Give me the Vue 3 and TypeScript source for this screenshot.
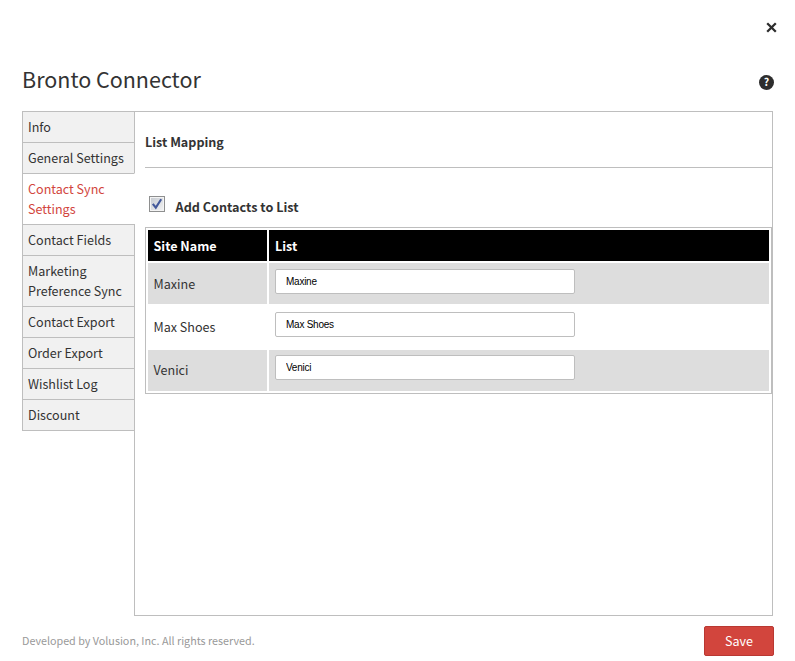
<script setup lang="ts">
import { ref } from 'vue'

const tabs: string[] = [
  'Info',
  'General Settings',
  'Contact Sync Settings',
  'Contact Fields',
  'Marketing Preference Sync',
  'Contact Export',
  'Order Export',
  'Wishlist Log',
  'Discount',
]
const activeTab = ref('Contact Sync Settings')
const addContacts = ref(true)
const sites = ref([
  { name: 'Maxine', list: 'Maxine' },
  { name: 'Max Shoes', list: 'Max Shoes' },
  { name: 'Venici', list: 'Venici' },
])
</script>

<template>
  <div class="dialog">
    <div class="topbar">
      <button class="close" type="button" aria-label="Close">
        <svg width="11" height="11" viewBox="0 0 11 11"><path d="M1.2 1.2 9.8 9.8M9.8 1.2 1.2 9.8" fill="none" stroke="#2d2d2d" stroke-width="2.3" /></svg>
      </button>
    </div>
    <header class="heading">
      <h1>Bronto Connector</h1>
      <span class="help">?</span>
    </header>
    <div class="body">
      <nav class="tabs">
        <a v-for="tab in tabs" :key="tab" class="tab" :class="{ active: tab === activeTab }" @click="activeTab = tab">{{ tab }}</a>
      </nav>
      <main class="panel">
        <h2>List Mapping</h2>
        <div class="option">
          <span class="check" role="checkbox" :aria-checked="addContacts" @click="addContacts = !addContacts">
            <svg v-if="addContacts" width="12" height="12" viewBox="0 0 12 12"><path d="M1.8 5.8 4.8 9.6 10.2 1.2" fill="none" stroke="#43599b" stroke-width="2.1" /></svg>
          </span>
          <span class="option-label">Add Contacts to List</span>
        </div>
        <div class="table">
          <div class="row head"><span class="cell">Site Name</span><span class="cell">List</span></div>
          <div v-for="site in sites" :key="site.name" class="row">
            <span class="cell">{{ site.name }}</span>
            <span class="cell field"><input v-model="site.list" type="text" /></span>
          </div>
        </div>
      </main>
    </div>
    <footer class="footer">
      <span class="credit">Developed by Volusion, Inc. All rights reserved.</span>
      <button class="save" type="button">Save</button>
    </footer>
  </div>
</template>

<style>
body {
  background: #fff;
  overflow: hidden;
}
</style>

<style scoped>
.dialog {
  box-sizing: border-box;
  width: 795px;
  height: 661px;
  padding: 0 22px;
  background: #fff;
  color: #333;
  font-family: "Noto Sans CJK SC", sans-serif;
  font-size: 12.57px;
  line-height: 20px;
}
.dialog * {
  box-sizing: border-box;
}
.topbar {
  display: flex;
  justify-content: flex-end;
  height: 59px;
  padding: 22px 0 0;
  margin-right: -4px;
}
.close {
  display: block;
  width: 11px;
  height: 11px;
  padding: 0;
  border: 0;
  background: none;
}
.close svg {
  display: block;
}
.heading {
  display: flex;
  justify-content: space-between;
  height: 52px;
}
h1 {
  margin: 0;
  font-size: 21.5px;
  font-weight: 400;
  line-height: 40px;
}
.help {
  width: 15px;
  height: 15px;
  margin: 16px -1px 0 0;
  border-radius: 50%;
  background: #2d2d2d;
  color: #fff;
  font-size: 10.5px;
  font-weight: 700;
  line-height: 14px;
  text-align: center;
}
.body {
  display: flex;
  align-items: flex-start;
}
.tabs {
  position: relative;
  z-index: 1;
  width: 113px;
  margin-right: -1px;
  border: 1px solid #bebebe;
  border-right: 0;
}
.tab {
  display: block;
  padding: 5px;
  border-right: 1px solid #bebebe;
  background: #f1f1f1;
}
.tab + .tab {
  border-top: 1px solid #bebebe;
}
.tab.active {
  border-right-color: #fff;
  background: #fff;
  color: #d2453d;
}
.panel {
  width: 639px;
  height: 505px;
  padding: 0 0 0 10px;
  border: 1px solid #bebebe;
}
h2 {
  height: 56px;
  margin: 0;
  padding-top: 20px;
  border-bottom: 1px solid #bebebe;
  font-size: 12.57px;
  font-weight: 700;
}
.option {
  display: flex;
  height: 59px;
  padding: 28px 0 0 4px;
}
.check {
  width: 16px;
  height: 16px;
  margin-right: 10.6px;
  padding: 1px;
  border: 1px solid #8e8f8f;
  background: linear-gradient(135deg, #c4c9d0, #f4f4f4);
  box-shadow: inset 0 0 0 1px #f4f4f4;
}
.check svg {
  display: block;
}
.option-label {
  margin-top: 1px;
  font-size: 12.63px;
  font-weight: 700;
}
.table {
  display: grid;
  grid-template-rows: 31px 41px 42px 41px;
  row-gap: 2px;
  height: 167px;
  padding: 2px;
  border: 1px solid #bebebe;
}
.row {
  display: grid;
  grid-template-columns: 119px 1fr;
  column-gap: 2px;
}
.cell {
  display: flex;
  align-items: center;
  padding: 0 6px 0 5.5px;
}
.row:nth-child(even) .cell {
  background: #ddd;
}
.head .cell {
  background: #000;
  color: #fff;
  font-weight: 700;
}
.head .cell:last-child {
  padding-left: 6px;
}
.row:last-child .cell {
  padding-bottom: 1px;
}
.cell.field {
  align-items: flex-start;
  padding-top: 6px;
  padding-left: 6px;
}
.row:last-child .field {
  padding-top: 5px;
}
input {
  width: 300px;
  height: 25px;
  padding: 0 10px 1px;
  border: 1px solid #bebebe;
  border-radius: 2px;
  outline: 0;
  background: #fff;
  color: #000;
  font-family: "Liberation Sans", sans-serif;
  font-size: 10px;
  letter-spacing: -0.25px;
}
.footer {
  display: flex;
  justify-content: space-between;
  padding-top: 10px;
}
.credit {
  margin-top: 5px;
  color: #999;
  font-size: 10.75px;
}
.save {
  width: 70px;
  height: 30px;
  margin-right: -1px;
  padding: 0 0 2px;
  border: 1px solid #b93832;
  border-radius: 2px;
  background: #d2453d;
  color: #fff;
  font-family: inherit;
  font-size: 12.57px;
}
</style>
